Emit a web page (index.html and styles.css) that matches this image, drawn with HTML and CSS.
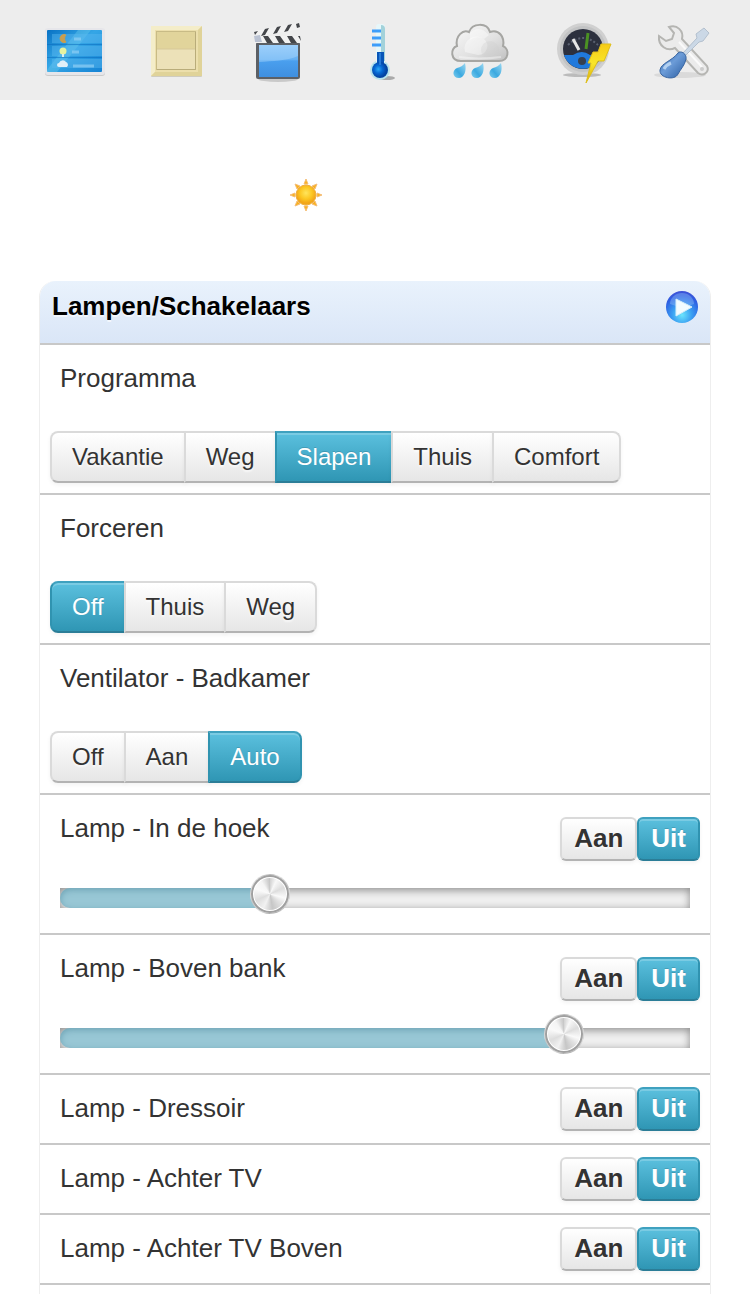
FILE: index.html
```html
<!doctype html>
<html lang="nl">
<head>
<meta charset="utf-8">
<meta name="viewport" content="width=device-width, initial-scale=1">
<title>Lampen/Schakelaars</title>
<link rel="stylesheet" href="styles.css">
</head>
<body>

<nav class="topbar">
    <a href="#dashboard" aria-label="Dashboard">
        <svg viewBox="0 0 64 64">
            <defs>
                <linearGradient id="dash" x1="0" y1="0" x2="1" y2="1"><stop offset="0" stop-color="#0872c4"/><stop offset=".45" stop-color="#35a6e6"/><stop offset="1" stop-color="#1583d4"/></linearGradient>
            </defs>
            <rect x="2" y="9" width="60" height="47" rx="3" fill="#cbcbcb"/>
            <rect x="2" y="8" width="60" height="47" rx="3" fill="#e6e6ea"/>
            <rect x="4" y="10" width="55" height="42" rx="1" fill="url(#dash)"/>
            <path d="M4 50L35 10H48L14 52H4z" fill="#72d0ee" opacity=".35"/>
            <path d="M9 14h50v9H9zM9 26h50v10H9zM9 39h50v9H9z" fill="#5ab8ef" opacity=".45"/>
            <path d="M4 24.500h55M4 37.500h55" stroke="#0869bd" opacity=".5"/>
            <path d="M23 15a4 4 0 1 0 0 7a5 5 0 0 1 0-7z" fill="#c79e50" stroke="#c79e50"/>
            <circle cx="20" cy="31" r="3.500" fill="#e6f3a0"/><path d="M19 34h2v3h-2z" fill="#d9eef0"/>
            <path d="M16 47a2 2 0 0 1 0-4a4 4 0 0 1 7-1a3 3 0 0 1 1 5z" fill="#e0eff8"/>
            <path d="M31 19h7M29 32h7M30 46h21" stroke="#8fcff5" stroke-width="3" opacity=".7"/>
        </svg>
    </a>
    <a href="#switches" aria-label="Schakelaars">
        <svg viewBox="0 0 64 64">
            <rect x="7" y="7" width="51" height="50" rx="1" fill="#cfccbf"/>
            <rect x="7" y="6" width="51" height="50" rx="1" fill="#ecdfac"/>
            <path d="M7 6h51l-4 4H11v42l-4 4z" fill="#f4edc9"/>
            <path d="M58 6v50H7l4-4h43V10z" fill="#e0d399"/>
            <rect x="12.500" y="11.500" width="39" height="38" fill="#ece1b8" stroke="#c8bb86"/>
            <path d="M13 12h38v17H13z" fill="#e1d49b"/>
            <path d="M13 29h38" stroke="#d6c998"/>
            <path d="M13 49.500h38.500V12" fill="none" stroke="#b9ac7a"/>
        </svg>
    </a>
    <a href="#scenes" aria-label="Scenes">
        <svg viewBox="0 0 64 64">
            <defs>
                <linearGradient id="clap" x1="0" y1="0" x2="0" y2="1"><stop offset="0" stop-color="#8bc6fa"/><stop offset=".45" stop-color="#65b0f3"/><stop offset=".5" stop-color="#4a9fee"/><stop offset="1" stop-color="#3f8fe0"/></linearGradient>
            </defs>
            <ellipse cx="33" cy="59" rx="20" ry="3" fill="#c9c9c9"/>
            <rect x="11" y="22" width="44" height="37" rx="2" fill="#5c6066"/>
            <rect x="14" y="25" width="39" height="32" fill="url(#clap)"/>
            <path d="M14 25h39v11c-12 5-25 5-39 6z" fill="#b5dcfc" opacity=".4"/>
            <path d="M9 16h47v7H9z" fill="#f1f1f1"/>
            <path d="M18 16h5l5 7h-6zM30 16h5l5 7h-6zM42 16h5l5 7h-6zM53 16h2l1 5z" fill="#44464a"/>
            <path d="M9 11l45-8 1 6-45 8z" fill="#f1f1f1"/>
            <path d="M20 9l4-1-4 7-4 1zM32 7l4-1-4 7-4 1zM43 5l4-1-4 7-4 1zM51 4l3-1 1 4-3 1zM9 12l4-1-3 4z" fill="#44464a"/>
            <path d="M9 16l6-1 2 7h-7z" fill="#bac2d2"/>
        </svg>
    </a>
    <a href="#temperature" aria-label="Temperatuur">
        <svg viewBox="0 0 64 64">
            <defs>
                <radialGradient id="bulb" cx=".4" cy=".45"><stop offset="0" stop-color="#2caaf6"/><stop offset=".5" stop-color="#0569d4"/><stop offset="1" stop-color="#0344a2"/></radialGradient>
            </defs>
            <ellipse cx="41" cy="58" rx="8" ry="2" fill="#aaa"/>
            <circle cx="34" cy="50" r="10" fill="#b7e4ec"/>
            <rect x="30" y="4" width="9" height="40" rx="3" fill="#e6f7fa"/>
            <path d="M35 5q4 0 4 4v32h-4z" fill="#a3d2da"/>
            <path d="M31 32h7v13h-7z" fill="#0855b8"/>
            <circle cx="34" cy="50" r="8" fill="url(#bulb)"/>
            <path d="M33 33h2v12h-2z" fill="#277bd7"/>
            <path d="M26 11h9M26 18h9M26 25h9" stroke="#3d9dfa" stroke-width="3"/>
        </svg>
    </a>
    <a href="#weather" aria-label="Weer">
        <svg viewBox="0 0 64 64">
            <defs>
                <linearGradient id="cloud" x1="0" y1="0" x2="1" y2="1"><stop offset="0" stop-color="#fafafa"/><stop offset=".55" stop-color="#e2e2e2"/><stop offset="1" stop-color="#c0c0c0"/></linearGradient>
                <linearGradient id="drop" x1="1" y1="0" x2="0" y2="1"><stop offset="0" stop-color="#9bd8f1"/><stop offset=".6" stop-color="#3ba9e0"/><stop offset="1" stop-color="#7dcdee"/></linearGradient>
            </defs>
            <path d="M14 41C3 41 3 28 10 26C8 16 16 9 22 12C25 3 40 2 43 12C52 9 58 17 56 26C63 29 62 41 52 41z" fill="url(#cloud)" stroke="#a6a6a3" stroke-width="2"/>
            <path d="M18 32a12 12 0 0 1 20-12a9 9 0 0 1-7 15z" fill="#fff" opacity=".4"/>
            <path d="M23 13q9-9 19 2l-5 4q-7-4-14 1z" fill="#fff" opacity=".4"/>
            <circle cx="43" cy="30" r="9" fill="#ccc" opacity=".3"/>
            <path d="M12 37q20 3 42 0" fill="none" stroke="#fff" stroke-width="2" opacity=".4"/>
            <g fill="url(#drop)">
                <path d="M18 43c2 8-1 15-6 15c-7 0-7-8-2-10q5-1 8-5z"/>
                <path d="M36 43c2 8-1 15-6 15c-7 0-7-8-2-10q5-1 8-5z"/>
                <path d="M54 43c2 8-1 15-6 15c-7 0-7-8-2-10q5-1 8-5z"/>
            </g>
        </svg>
    </a>
    <a href="#utility" aria-label="Energie">
        <svg viewBox="0 0 64 64">
            <defs>
                <linearGradient id="bolt" x1="0" y1="0" x2="0" y2="1"><stop offset="0" stop-color="#f7cb16"/><stop offset=".5" stop-color="#f8e62a"/><stop offset="1" stop-color="#d9a90b"/></linearGradient>
            </defs>
            <ellipse cx="34" cy="55" rx="19" ry="2" fill="#bbb"/>
            <circle cx="35" cy="29" r="26" fill="#d0d0d0"/>
            <circle cx="35" cy="29" r="23" fill="#c2c3c4"/>
            <circle cx="35" cy="29" r="20" fill="#2c303e"/>
            <path d="M16 35h9q9-6 17 0h12a20 20 0 0 1-38 0z" fill="#2079dc"/>
            <path d="M20 25q15-14 30 0" fill="none" stroke="#5a6070" stroke-width="2" stroke-dasharray="2 2"/>
            <path d="M25 19l6 11" stroke="#e5e5e5" stroke-width="3"/>
            <path d="M40 13l-2 16" stroke="#4b9123" stroke-width="3"/>
            <circle cx="34" cy="41" r="4" fill="#364050"/>
            <path d="M53 24h10l-7 17h-6L38 63l5-20h-3l5-11h5z" fill="url(#bolt)" stroke="#dfbf1c"/>
        </svg>
    </a>
    <a href="#setup" aria-label="Instellingen">
        <svg viewBox="0 0 64 64">
            <defs>
                <linearGradient id="grip" x1="0" y1="0" x2="1" y2="1"><stop offset="0" stop-color="#2f65ac"/><stop offset=".45" stop-color="#6c9cd8"/><stop offset="1" stop-color="#285b9f"/></linearGradient>
            </defs>
            <ellipse cx="31" cy="55" rx="26" ry="3" fill="#dadada"/>
            <path d="M20 7c8-3 15 4 13 12L58 46c3 6-4 11-9 7L26 28c-8 4-17-2-16-12l7 5 6-2 2-6z" fill="#ebebeb" stroke="#b5b5b2" stroke-width="2"/>
            <path d="M30 22l23 25" stroke="#fafafa" stroke-width="2"/>
            <circle cx="53" cy="49" r="2" fill="#ccc"/>
            <path d="M34 33l14-15-1-4 8-6 5 5-6 8-4 1-14 14z" fill="#cbd8e6" stroke="#b3c0ce"/>
            <path d="M29 33c3-3 9 1 8 6-1 6-6 11-8 15-3 7-19 4-18-4 1-7 12-9 18-17z" fill="url(#grip)" stroke="#3764a0"/>
            <path d="M15 49q2-4 7-6" fill="none" stroke="#b2d0f0" stroke-width="3"/>
        </svg>
    </a>
</nav>

<div class="daylight">
    <svg class="sun" viewBox="0 0 32 32" role="img" aria-label="Zon">
        <defs>
            <radialGradient id="sun" cx=".5" cy=".4"><stop offset="0" stop-color="#ffe55c"/><stop offset=".6" stop-color="#fcc722"/><stop offset="1" stop-color="#f2a618"/></radialGradient>
        </defs>
        <path d="M16 0l2 5h-4zM16 32l2-5h-4zM0 16l5-2v4zM32 16l-5-2v4zM5 5l5 2-3 3zM27 5l-5 2 3 3zM5 27l5-2-3-3zM27 27l-5-2 3-3z" fill="#f9b21b" stroke="#f4bd77"/>
        <circle cx="16" cy="16" r="10" fill="url(#sun)" stroke="#efad3a"/>
    </svg>
</div>

<main class="panel">

    <header class="panel-head">
        <h1>Lampen/Schakelaars</h1>
        <a href="#lampen" aria-label="Open lampen/schakelaars">
            <svg viewBox="0 0 32 32">
                <defs>
                    <radialGradient id="play" cx=".5" cy=".75" r=".75"><stop offset="0" stop-color="#6be5fd"/><stop offset=".4" stop-color="#3ba0f2"/><stop offset=".8" stop-color="#2d5fe2"/><stop offset="1" stop-color="#3e50d5"/></radialGradient>
                </defs>
                <circle cx="16" cy="16" r="16" fill="url(#play)"/>
                <path d="M4 13a12 11 0 0 1 24 0q-12 5-24 0z" fill="#a6ccf8" opacity=".35"/>
                <path d="M10 8v17l16-9z" fill="#f3fcff" stroke="#d5eefa"/>
            </svg>
        </a>
    </header>

    <section class="row selector">
        <h2>Programma</h2>
        <div class="segments">
            <button type="button">Vakantie</button>
            <button type="button">Weg</button>
            <button type="button" class="active">Slapen</button>
            <button type="button">Thuis</button>
            <button type="button">Comfort</button>
        </div>
    </section>

    <section class="row selector">
        <h2>Forceren</h2>
        <div class="segments">
            <button type="button" class="active">Off</button>
            <button type="button">Thuis</button>
            <button type="button">Weg</button>
        </div>
    </section>

    <section class="row selector">
        <h2>Ventilator - Badkamer</h2>
        <div class="segments">
            <button type="button">Off</button>
            <button type="button">Aan</button>
            <button type="button" class="active">Auto</button>
        </div>
    </section>

    <section class="row dimmer">
        <h2><label for="hoek">Lamp - In de hoek</label></h2>
        <div class="toggle">
            <button type="button">Aan</button>
            <button type="button" class="active">Uit</button>
        </div>
        <div class="slider">
            <div class="fill" style="width: 33.3%"></div>
            <input type="range" id="hoek" min="0" max="15" value="5">
        </div>
    </section>

    <section class="row dimmer">
        <h2><label for="bank">Lamp - Boven bank</label></h2>
        <div class="toggle">
            <button type="button">Aan</button>
            <button type="button" class="active">Uit</button>
        </div>
        <div class="slider">
            <div class="fill" style="width: 80%"></div>
            <input type="range" id="bank" min="0" max="15" value="12">
        </div>
    </section>

    <section class="row">
        <h2>Lamp - Dressoir</h2>
        <div class="toggle">
            <button type="button">Aan</button>
            <button type="button" class="active">Uit</button>
        </div>
    </section>

    <section class="row">
        <h2>Lamp - Achter TV</h2>
        <div class="toggle">
            <button type="button">Aan</button>
            <button type="button" class="active">Uit</button>
        </div>
    </section>

    <section class="row">
        <h2>Lamp - Achter TV Boven</h2>
        <div class="toggle">
            <button type="button">Aan</button>
            <button type="button" class="active">Uit</button>
        </div>
    </section>

</main>

</body>
</html>
```
FILE: styles.css
```css
* { box-sizing: border-box; }
body { margin: 0; min-height: 100vh; display: flex; flex-direction: column; background: #fff; color: #333; font-family: "Liberation Sans", Arial, Helvetica, sans-serif; font-size: 26px; }
h1, h2 { margin: 0; font-size: 26px; }
svg { display: block; }

/* top navigation */
.topbar { display: grid; grid-template-columns: repeat(7, 1fr); justify-items: center; padding: 20px 18px 16px 24px; background: #ededed; }
.topbar svg { width: 64px; height: 64px; }

.daylight { padding: 79px 40px 70px 290px; }
.sun { width: 32px; height: 32px; }

/* panel */
.panel { flex: 1; margin: 0 39px; border: 1px solid #eee; border-width: 0 1px; border-radius: 16px 16px 0 0; }
.panel-head { display: flex; justify-content: space-between; padding: 10px 12px 20px; border-bottom: 2px solid #c8c8c8; border-radius: 16px 16px 0 0; background: linear-gradient(#e9f2fc, #dae6f7); }
.panel-head h1 { color: #000; line-height: 30px; text-shadow: 0 2px 0 rgba(255,255,255,.6); }
.panel-head svg { width: 32px; height: 32px; }

.row { display: grid; grid-template-columns: 1fr auto; align-items: start; padding: 10px 10px 12px; border-bottom: 2px solid #c8c8c8; }
.row h2 { padding-left: 10px; font-weight: normal; line-height: 46px; }

/* buttons */
button { height: 52px; padding: 0 20px; border: 2px solid #dadada; border-bottom-color: #b3b3b3; background: linear-gradient(#fff, #e6e6e6); box-shadow: 0 2px 4px rgba(0,0,0,.05); color: #333; font-family: inherit; font-size: 24px; text-shadow: 0 2px 2px rgba(255,255,255,.75); cursor: pointer; }
button.active { border-color: #3fa1bf #3093b0 #2b7d97; background: linear-gradient(#5bc0de, #2f96b4); box-shadow: inset 0 2px 0 rgba(255,255,255,.2), 0 2px 4px rgba(0,0,0,.05); color: #fff; text-shadow: 0 -1px 0 rgba(0,0,0,.15); }

.selector { grid-template-columns: 1fr; row-gap: 30px; padding-bottom: 10px; }
.segments { display: flex; }
.segments button + button { margin-left: -2px; }
.segments button:first-child { border-radius: 8px 0 0 8px; }
.segments button:last-child { border-radius: 0 8px 8px 0; }

.toggle { display: flex; padding-top: 2px; }
.toggle button { height: 44px; padding: 0 12px 2px; border-radius: 6px; font-size: 26px; font-weight: bold; }

/* dimmer slider */
.dimmer { padding-bottom: 25px; }
.dimmer .toggle { padding-top: 12px; }
.slider { grid-column: 1 / 3; display: grid; height: 20px; margin: 27px 10px 0; background: #f0f0f0; box-shadow: inset 0 2px 8px #888; }
.fill { grid-area: 1 / 1; height: 20px; border-radius: 10px 0 0 10px; background: #98c7d5; box-shadow: inset 0 2px 6px rgba(70,130,150,.5); }
.slider input { grid-area: 1 / 1; appearance: none; width: calc(100% + 40px); height: 40px; margin: -14px -20px 0; background: none; cursor: pointer; }
.slider input::-webkit-slider-thumb { appearance: none; width: 40px; height: 40px; border: 1px solid rgba(0,0,0,.1); border-radius: 50%; background: conic-gradient(#d2d2d2, #f8f8f8 25deg, #ddd 65deg, #fafafa 105deg, #e2e2e2 130deg, #c6c6c6 170deg, #f1f1f1 205deg, #ddd 245deg, #fafafa 290deg, #f5f5f5 325deg, #c4c4c4); box-shadow: inset 0 0 0 2px #a0a0a0, inset 0 0 0 3px #fff; }
```
